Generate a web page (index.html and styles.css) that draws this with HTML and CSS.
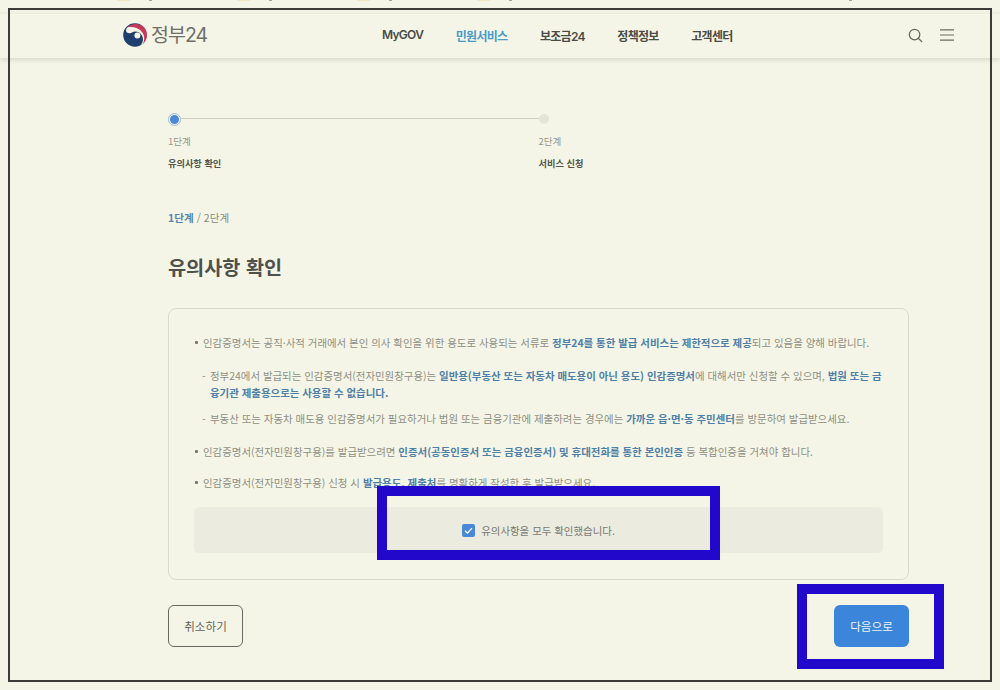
FILE: index.html
```html
<!DOCTYPE html>
<html lang="ko">
<head>
  <meta charset="UTF-8">
  <title>유의사항 확인 | 정부24</title>
  <link rel="stylesheet" href="styles.css">
</head>
<body>

<div class="cut-strip">
  <i class="chip"></i><b class="tail"></b>
  <i class="chip"></i><b class="tail"></b>
  <i class="chip"></i><b class="tail"></b>
  <i class="chip"></i><b class="tail"></b>
  <b class="tail last"></b>
</div>

<header class="site-header">
  <a class="logo" href="#">
    <svg class="logo-mark" viewBox="0 0 24 24" width="24" height="24">
      <circle cx="12" cy="12" r="11.8" fill="#1f3f6e"/>
      <path d="M3.6 5.2C7 1.2 14 .6 18.6 3.4 23 6.2 24.6 11 23.4 15.4 22.6 18.4 20.4 20.8 17.8 22 20.2 19 20.6 15.4 19 12.6 17 9 12.6 7.6 9 9.4 7 10.4 5.4 10.6 4 9.6 3 8.8 2.8 6.4 3.6 5.2Z" fill="#f4f5e6"/>
      <path d="M4.4 4.4C8 .6 14.4-.2 18.8 2.6 23 5.2 24.8 10.4 23.6 15 23 17.6 21.4 19.8 19.6 21.2 21.8 17.4 21.8 12.6 19 9 15.6 4.6 9.4 3.2 4.4 4.4Z" fill="#c7395a"/>
      <path d="M4 9.8C7 12 9.4 10.6 11.4 9.8 14.6 8.6 18.4 10.4 18.4 14 18.4 16.2 16.4 18 14 18 11.4 18 10 16.2 8.4 15 6.6 13.6 4.6 12.4 4 9.8Z" fill="#1f3f6e"/>
      <circle cx="14.4" cy="12.4" r="3" fill="#f4f5e6"/>
    </svg>
    <span class="logo-text">정부24</span>
  </a>
  <nav class="gnb">
    <a href="#">MyGOV</a>
    <a href="#" class="on">민원서비스</a>
    <a href="#">보조금24</a>
    <a href="#">정책정보</a>
    <a href="#">고객센터</a>
  </nav>
  <div class="util">
    <svg viewBox="0 0 16 16" width="15" height="15" fill="none" stroke="#6b6b62" stroke-width="1.4">
      <circle cx="7" cy="7" r="5.6"/>
      <path d="M11 11l4 4"/>
    </svg>
    <svg viewBox="0 0 14 12" width="14" height="12" fill="none" stroke="#6b6b62" stroke-width="1.2">
      <path d="M0 .8h14M0 6h14M0 11.2h14"/>
    </svg>
  </div>
</header>

<main class="content">
  <ol class="steps">
    <li class="step current">
      <div class="step-track"><span class="step-dot"></span><span class="step-line"></span></div>
      <p class="step-no">1단계</p>
      <p class="step-name">유의사항 확인</p>
    </li>
    <li class="step">
      <div class="step-track"><span class="step-dot"></span></div>
      <p class="step-no">2단계</p>
      <p class="step-name">서비스 신청</p>
    </li>
  </ol>

  <p class="crumb"><strong>1단계</strong> / 2단계</p>
  <h2 class="title">유의사항 확인</h2>

  <section class="notice">
    <p class="item">인감증명서는 공직·사적 거래에서 본인 의사 확인을 위한 용도로 사용되는 서류로 <strong>정부24를 통한 발급 서비스는 제한적으로 제공</strong>되고 있음을 양해 바랍니다.</p>
    <p class="sub">정부24에서 발급되는 인감증명서(전자민원창구용)는 <strong>일반용(부동산 또는 자동차 매도용이 아닌 용도) 인감증명서</strong>에 대해서만 신청할 수 있으며, <strong>법원 또는 금융기관 제출용으로는 사용할 수 없습니다.</strong></p>
    <p class="sub last-sub">부동산 또는 자동차 매도용 인감증명서가 필요하거나 법원 또는 금융기관에 제출하려는 경우에는 <strong>가까운 읍·면·동 주민센터</strong>를 방문하여 발급받으세요.</p>
    <p class="item tight">인감증명서(전자민원창구용)를 발급받으려면 <strong>인증서(공동인증서 또는 금융인증서) 및 휴대전화를 통한 본인인증</strong> 등 복합인증을 거쳐야 합니다.</p>
    <p class="item">인감증명서(전자민원창구용) 신청 시 <strong>발급용도, 제출처</strong>를 명확하게 작성한 후 발급받으세요.</p>
    <label class="agree">
      <span class="check">
        <svg viewBox="0 0 12 12" width="13" height="13" fill="none" stroke="#fff" stroke-width="1.2"><path d="M2.8 6.2l2.2 2.2 4.2-4.6"/></svg>
      </span>
      유의사항을 모두 확인했습니다.
    </label>
  </section>

  <div class="actions">
    <button class="btn">취소하기</button>
    <button class="btn primary">다음으로</button>
  </div>
</main>

<!-- review marks drawn over the capture -->
<div class="frame"></div>
<div class="mark mark-agree"></div>
<div class="mark mark-next"></div>

</body>
</html>
```

FILE: styles.css
```css
* {
  box-sizing: border-box;
}

html, body {
  height: 690px;
  overflow: hidden;
}

body {
  margin: 0;
  position: relative;
  background: #f4f5e6;
  color: #55554f;
  font-family: "Noto Sans CJK KR", "Noto Sans", sans-serif;
}

p, h2, ol {
  margin: 0;
  padding: 0;
}

a {
  color: inherit;
  text-decoration: none;
}

/* page content cut off at the top of the capture */
.cut-strip {
  height: 13px;
  padding-left: 117px;
  display: flex;
  align-items: flex-start;
}

.chip {
  width: 13px;
  height: 1px;
  background: #f0e6bf;
  margin-right: 19px;
}

.tail {
  width: 3px;
  height: 1px;
  background: #a5a59b;
  margin-right: 85px;
}

.tail.last {
  margin-left: 252px;
}

.site-header {
  height: 45px;
  display: flex;
  align-items: center;
  padding: 0 46px 2px 123px;
  border-top: 1px solid #ecedde;
  box-shadow: 0 2px 5px rgba(0,0,0,0.12);
}

.logo {
  display: flex;
  align-items: center;
  gap: 4px;
  width: 259px;
}

.logo-mark {
  flex: none;
}

.logo-text {
  font-family: Inter, "Noto Sans CJK KR", sans-serif;
  font-size: 19.5px;
  line-height: 24px;
  letter-spacing: -1px;
  color: #6f6f68;
}

.gnb {
  display: flex;
  gap: 32.5px;
  font-family: Inter, "Noto Sans CJK KR", sans-serif;
  font-size: 12px;
  font-weight: 600;
  letter-spacing: -0.7px;
  color: #4b4b46;
}

.gnb .on {
  color: #4a9cc7;
}

.util {
  margin-left: auto;
  display: flex;
  align-items: center;
  gap: 17px;
}

.content {
  width: 741px;
  margin-left: 168px;
}

.steps {
  list-style: none;
  display: flex;
  padding-top: 55px;
}

.step {
  width: 371px;
}

.step-track {
  height: 12px;
  display: flex;
  align-items: center;
}

.step-dot {
  flex: none;
  width: 10px;
  height: 10px;
  border-radius: 50%;
  background: #e4e4d9;
}

.current .step-dot {
  width: 13px;
  height: 13px;
  background: #4a89d6;
  border: 2px solid #eef3f2;
  outline: 1px solid #9cc0d4;
  outline-offset: -1px;
}

.step-line {
  flex: 1;
  height: 1px;
  margin-top: -2px;
  background: #cfd0c3;
}

.step-no {
  margin-top: 9px;
  font-size: 9.5px;
  line-height: 14px;
  color: #96968c;
}

.step-name {
  margin-top: 8px;
  font-size: 9.2px;
  line-height: 14px;
  font-weight: 700;
  color: #55554f;
}

.crumb {
  margin-top: 40px;
  font-size: 10.6px;
  line-height: 16px;
  color: #8c8c82;
}

.crumb strong {
  color: #5687ad;
}

.title {
  margin-top: 26px;
  font-size: 19.7px;
  line-height: 30px;
  font-weight: 700;
  color: #4e504c;
}

.notice {
  margin-top: 26px;
  height: 272px;
  padding: 25px 25px 0;
  border: 1px solid #d9dacc;
  border-radius: 8px;
  font-size: 10.45px;
  line-height: 17px;
  color: #8f8f85;
}

.notice strong {
  color: #4f80a8;
}

.item {
  position: relative;
  padding-left: 9px;
  margin-bottom: 16px;
}

.item.tight {
  margin-bottom: 14px;
}

.item::before {
  content: "";
  position: absolute;
  left: 1px;
  top: 7px;
  width: 3px;
  height: 3px;
  border-radius: 1px;
  background: #77776e;
}

.sub {
  position: relative;
  padding-left: 16px;
  margin-bottom: 9px;
}

.sub.last-sub {
  margin-bottom: 16px;
}

.sub::before {
  content: "-";
  position: absolute;
  left: 8px;
}

.agree {
  margin-top: 16px;
  height: 46px;
  display: flex;
  align-items: center;
  justify-content: center;
  gap: 6px;
  border-radius: 5px;
  background: #ebebdf;
  color: #7a7a71;
}

.check {
  width: 13px;
  height: 13px;
  border-radius: 2px;
  background: #4a89d6;
}

.check svg {
  display: block;
}

.actions {
  margin-top: 25px;
  display: flex;
  justify-content: space-between;
}

.btn {
  width: 75px;
  height: 42px;
  padding: 0;
  background: none;
  border: 1px solid #6a6a62;
  border-radius: 6px;
  font-family: inherit;
  font-size: 11.6px;
  color: #66665e;
}

.btn.primary {
  background: #3b86da;
  border: none;
  color: #f2f4ee;
}

.frame {
  position: absolute;
  left: 8px;
  top: 8px;
  width: 984px;
  height: 674px;
  border: 2px solid #3c3c38;
}

.mark {
  position: absolute;
  border: 10px solid #2208cb;
}

.mark-agree {
  left: 377px;
  top: 486px;
  width: 343px;
  height: 74px;
}

.mark-next {
  left: 797px;
  top: 584px;
  width: 147px;
  height: 85px;
}
```
